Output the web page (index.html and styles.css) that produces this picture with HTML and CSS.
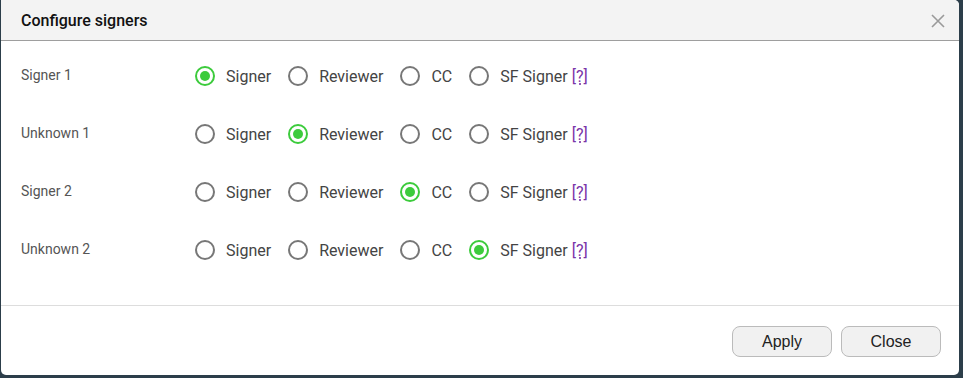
FILE: index.html
```html
<!DOCTYPE html>
<html>
<head>
<meta charset="utf-8">
<link rel="stylesheet" href="styles.css">
</head>
<body>
<div class="dialog">
  <div class="header">
    <span class="title">Configure signers</span>
    <span class="close-x"><svg width="16" height="16" viewBox="0 0 16 16"><path d="M2 2 L14 14 M14 2 L2 14" stroke="#9a9a9a" stroke-width="1.6" fill="none"/></svg></span>
  </div>
  <div class="content">
    <div class="row">
      <div class="name">Signer 1</div>
      <div class="opts">
        <span class="opt"><span class="radio on"></span><span class="lbl">Signer</span></span>
        <span class="opt"><span class="radio"></span><span class="lbl">Reviewer</span></span>
        <span class="opt"><span class="radio"></span><span class="lbl">CC</span></span>
        <span class="opt"><span class="radio"></span><span class="lbl">SF Signer <a class="help">[?]</a></span></span>
      </div>
    </div>
    <div class="row">
      <div class="name">Unknown 1</div>
      <div class="opts">
        <span class="opt"><span class="radio"></span><span class="lbl">Signer</span></span>
        <span class="opt"><span class="radio on"></span><span class="lbl">Reviewer</span></span>
        <span class="opt"><span class="radio"></span><span class="lbl">CC</span></span>
        <span class="opt"><span class="radio"></span><span class="lbl">SF Signer <a class="help">[?]</a></span></span>
      </div>
    </div>
    <div class="row">
      <div class="name">Signer 2</div>
      <div class="opts">
        <span class="opt"><span class="radio"></span><span class="lbl">Signer</span></span>
        <span class="opt"><span class="radio"></span><span class="lbl">Reviewer</span></span>
        <span class="opt"><span class="radio on"></span><span class="lbl">CC</span></span>
        <span class="opt"><span class="radio"></span><span class="lbl">SF Signer <a class="help">[?]</a></span></span>
      </div>
    </div>
    <div class="row">
      <div class="name">Unknown 2</div>
      <div class="opts">
        <span class="opt"><span class="radio"></span><span class="lbl">Signer</span></span>
        <span class="opt"><span class="radio"></span><span class="lbl">Reviewer</span></span>
        <span class="opt"><span class="radio"></span><span class="lbl">CC</span></span>
        <span class="opt"><span class="radio on"></span><span class="lbl">SF Signer <a class="help">[?]</a></span></span>
      </div>
    </div>
  </div>
  <div class="footer">
    <button class="btn">Apply</button>
    <button class="btn">Close</button>
  </div>
</div>
</body>
</html>
```
FILE: styles.css
```css
html, body {
  margin: 0;
  padding: 0;
  background: #2c3e4a;
  height: 378px;
  overflow: hidden;
}
body {
  font-family: Roboto, "Liberation Sans", sans-serif;
}
.dialog {
  margin-left: 1px;
  width: 958px;
  height: 375px;
  background: #fff;
  border-radius: 0 5px 5px 5px;
  overflow: hidden;
  display: flex;
  flex-direction: column;
}
.header {
  height: 40px;
  background: #f3f3f3;
  border-bottom: 1px solid #9e9e9e;
  display: flex;
  align-items: center;
  justify-content: space-between;
  padding: 0 13px 0 20px;
}
.title {
  font-size: 16px;
  font-weight: 500;
  color: #111;
}
.close-x {
  display: flex;
  width: 16px;
  height: 16px;
  margin-top: 2px;
}
.content {
  padding: 6px 0 26px 20px;
  border-bottom: 1px solid #ddd;
}
.row {
  height: 58px;
  display: flex;
  align-items: center;
}
.name {
  width: 174px;
  font-size: 14px;
  color: #555;
  margin-top: -3px;
}
.opts {
  display: flex;
  align-items: center;
}
.opt {
  display: flex;
  align-items: center;
  margin-right: 17px;
}
.radio {
  width: 16px;
  height: 16px;
  border: 2px solid #777;
  border-radius: 50%;
  box-sizing: content-box;
  display: flex;
  align-items: center;
  justify-content: center;
}
.radio.on {
  border-color: #3ccb3c;
}
.radio.on::after {
  content: "";
  width: 10px;
  height: 10px;
  border-radius: 50%;
  background: #3ccb3c;
}
.lbl {
  margin-left: 11px;
  font-size: 16px;
  color: #444;
}
.help {
  color: #7a34a8;
  text-decoration: underline dotted;
  text-underline-offset: 2px;
}
.footer {
  flex: 1;
  display: flex;
  justify-content: flex-end;
  align-items: flex-start;
  padding: 20px 18px 0 0;
  gap: 9px;
}
.btn {
  width: 100px;
  height: 31px;
  border: 1px solid #bbb;
  border-radius: 8px;
  background: #f1f1f1;
  font-family: "Liberation Sans", Arial, sans-serif;
  font-size: 16px;
  color: #222;
  padding: 0;
}
```
